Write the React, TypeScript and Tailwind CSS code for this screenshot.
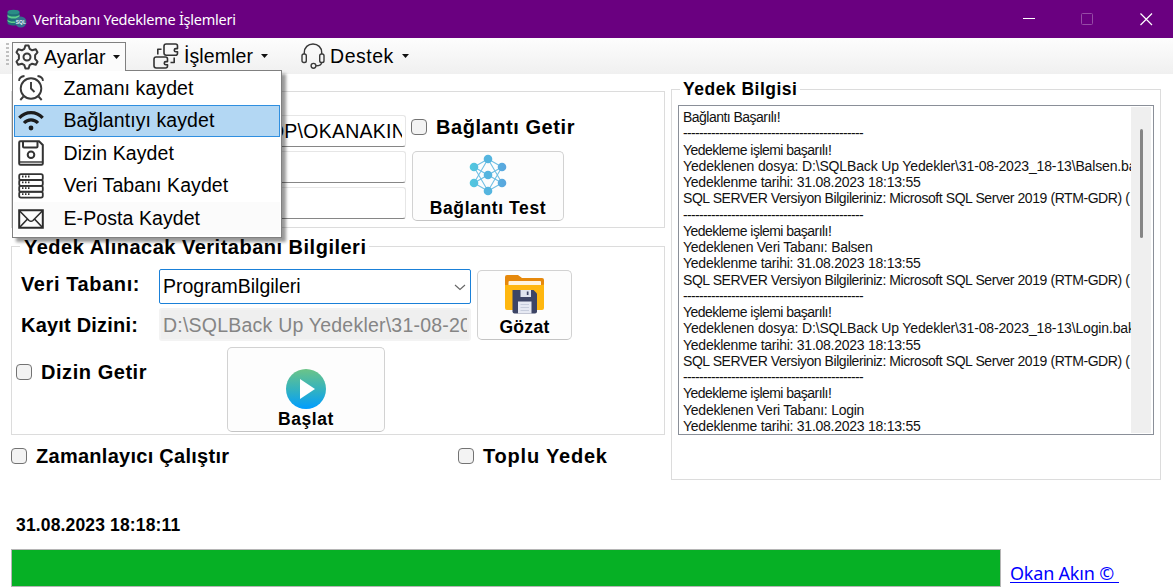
import type { ReactNode } from "react";

const DASHES = "---------------------------------------------";
const SQL_LINE = "SQL SERVER Versiyon Bilgileriniz: Microsoft SQL Server 2019 (RTM-GDR) (";

const LOG: string[] = [
  "Bağlantı Başarılı!",
  DASHES,
  "Yedekleme işlemi başarılı!",
  "Yedeklenen dosya: D:\\SQLBack Up Yedekler\\31-08-2023_18-13\\Balsen.bak",
  "Yedeklenme tarihi: 31.08.2023 18:13:55",
  SQL_LINE,
  DASHES,
  "Yedekleme işlemi başarılı!",
  "Yedeklenen Veri Tabanı: Balsen",
  "Yedeklenme tarihi: 31.08.2023 18:13:55",
  SQL_LINE,
  DASHES,
  "Yedekleme işlemi başarılı!",
  "Yedeklenen dosya: D:\\SQLBack Up Yedekler\\31-08-2023_18-13\\Login.bak",
  "Yedeklenme tarihi: 31.08.2023 18:13:55",
  SQL_LINE,
  DASHES,
  "Yedekleme işlemi başarılı!",
  "Yedeklenen Veri Tabanı: Login",
  "Yedeklenme tarihi: 31.08.2023 18:13:55",
];

function logTracking(line: string) {
  if (line === DASHES) return "tracking-[-0.66px]";
  if (line === SQL_LINE) return "tracking-[-0.43px]";
  if (line.includes("dosya")) return "tracking-[-0.15px]";
  if (line.includes("başarılı") || line.startsWith("Bağlantı")) return "tracking-[-0.53px]";
  return "tracking-[-0.25px]";
}

function AppIcon() {
  return (
    <svg width="20" height="20" viewBox="0 0 20 20" className="shrink-0">
      <path d="M0.5 3v11c0 1.4 2.6 2.5 6 2.5s6-1.100 6-2.500V3z" fill="#1f6f78" />
      <ellipse cx="6.500" cy="3" rx="6" ry="2.300" fill="#2a8c86" />
      <path d="M.5 5.500c1 1.500 3 2 6 2s5-.5 6-2v2c-1 1.500-3 2-6 2s-5-.5-6-2zM.5 10.500c1 1.500 3 2 6 2s5-.5 6-2v1.600c-1 1.500-3 2-6 2s-5-.5-6-2z" fill="#5fd08c" />
      <circle cx="13.800" cy="13" r="5.600" fill="#35728f" />
      <text x="13.800" y="15" fontSize="5" fontWeight="700" fill="#e6f1f5" textAnchor="middle" fontFamily="Liberation Sans, sans-serif">SQL</text>
    </svg>
  );
}

function GearIcon() {
  return (
    <svg width="24" height="26" viewBox="0 0 24 26" fill="none" stroke="#3a3a3a" strokeWidth="2" strokeLinejoin="round">
      <path d="M9.400 4.800 10.400 1.500h3.200l1 3.300 2.600 1.500 3.600-1 1.700 3-2.400 2.800v3.800l2.400 2.800-1.700 3-3.600-1-2.600 1.500-1 3.300h-3.200l-1-3.300-2.600-1.500-3.600 1-1.700-3 2.400-2.800v-3.800L1.500 8.300l1.700-3 3.600 1z" />
      <circle cx="12" cy="13" r="3.500" />
    </svg>
  );
}

function ProcessIcon() {
  return (
    <svg width="26" height="26" viewBox="0 0 26 26" fill="none" stroke="#333" strokeWidth="1.600" strokeLinejoin="round">
      <path d="M11 3.200Q11 1 13.200 1h9.300q2 0 2 2v2.600h-1.600c-2.200 0-2.200 3.200 0 3.200h1.600v1.400q0 2-2 2h-9.300Q11 12.200 11 10z" />
      <path d="M1 16.200Q1 14 3.200 14h9.300q2 0 2 2v2.600h-1.600c-2.200 0-2.200 3.200 0 3.200h1.600V23q0 2-2 2H3.200Q1 25 1 22.800z" />
      <path d="M4.800 11.500V6.200h3.700M21.200 14.500v5h-3.700" />
    </svg>
  );
}

function HeadsetIcon() {
  return (
    <svg width="24" height="26" viewBox="0 0 24 26" fill="none" stroke="#3a3a3a" strokeWidth="1.400">
      <path d="M3.300 11V9.500C3.300 4.500 7 1 12 1s8.700 3.500 8.700 8.500V11" />
      <rect x="1" y="11" width="4.300" height="8.500" rx="1.800" />
      <rect x="18.700" y="11" width="4.300" height="8.500" rx="1.800" />
      <path d="M20.500 19.500c0 2.500-2 3.300-5.400 3.300" />
      <circle cx="12.500" cy="22.800" r="2.400" />
    </svg>
  );
}

function ClockIcon() {
  return (
    <svg width="26" height="26" viewBox="0 0 26 26" fill="none" stroke="#3a3a3a" strokeWidth="1.900">
      <circle cx="13" cy="13.500" r="10.300" />
      <path d="M13 7v6.500l3.500 3.500" />
      <path d="M1 5.800C1.300 3 3 1.300 6.500 1M25 5.800C24.700 3 23 1.300 19.500 1M5.500 21.500l-3.200 3.500M20.500 21.500l3.200 3.500" />
    </svg>
  );
}

function WifiIcon() {
  return (
    <svg width="26" height="22" viewBox="0 0 26 22" fill="none" stroke="#1c1c1c" strokeWidth="3.200">
      <path d="M1.300 7.800c6.500-6.900 16.900-6.900 23.400 0M6 13c4-4.200 10-4.200 14 0" />
      <circle cx="13" cy="18" r="2.400" fill="#1c1c1c" stroke="none" />
    </svg>
  );
}

function DiskIcon() {
  return (
    <svg width="26" height="26" viewBox="0 0 26 26" fill="none" stroke="#333" strokeWidth="2">
      <path d="M2.500 1.200H21l3.800 3.800v18.500q0 1.300-1.300 1.300h-21q-1.300 0-1.300-1.300v-21q0-1.300 1.300-1.300z" />
      <path d="M5 1.200v5.300q0 1 1 1h12.500q1 0 1-1V1.200" />
      <circle cx="13" cy="14.800" r="3.300" />
      <path d="M1 22h24" strokeWidth="1.400" />
    </svg>
  );
}

function ServerIcon() {
  return (
    <svg width="26" height="26" viewBox="0 0 26 26" fill="none" stroke="#333" strokeWidth="1.800">
      <rect x="1.200" y="1.200" width="23.600" height="5.800" rx="1.800" />
      <rect x="1.200" y="7" width="23.600" height="5.800" rx="1.800" />
      <rect x="1.200" y="12.900" width="23.600" height="5.800" rx="1.800" />
      <rect x="1.200" y="18.800" width="23.600" height="5.800" rx="1.800" />
      <path d="M4 3.500h1.500M7 3.500h1.500M10 3.500h1.500M4 9.300h1.500M7 9.300h1.500M10 9.300h1.500M4 15.200h1.500M7 15.200h1.500M10 15.200h1.500M4 21.100h1.500M7 21.100h1.500M10 21.100h1.500" strokeWidth="1.800" />
    </svg>
  );
}

function MailIcon() {
  return (
    <svg width="26" height="20" viewBox="0 0 26 20" fill="none" stroke="#2b2b2b" strokeWidth="2">
      <path d="M1.200 1.200h23.600v17.600H1.200z" />
      <path d="M1.200 1.500 11 11.500q2 1.600 4 0L24.800 1.500M1.500 18.500 9.500 10M24.500 18.500 16.500 10" strokeWidth="1.600" />
    </svg>
  );
}

function NetworkIcon() {
  return (
    <svg width="38" height="42" viewBox="0 0 38 42">
      <defs>
        <linearGradient id="net" x1="0" x2="38" y1="0" y2="0" gradientUnits="userSpaceOnUse">
          <stop offset="0" stopColor="#52c8df" />
          <stop offset="1" stopColor="#5aa5de" />
        </linearGradient>
      </defs>
      <path
        d="M19 5 5 13M19 5 33 13M19 37 5 29M19 37 33 29M19 5 5 29M19 5 33 29M19 37 5 13M19 37 33 13M5 13 19 21 33 13M5 29 19 21 33 29"
        stroke="#72c0e4"
        strokeWidth="1.100"
        fill="none"
      />
      <g fill="url(#net)">
        <circle cx="19" cy="5" r="4.300" fill="#55b5df" />
        <circle cx="5" cy="13" r="4.300" />
        <circle cx="33" cy="13" r="4.300" />
        <circle cx="19" cy="21" r="4.300" fill="#55b5df" />
        <circle cx="5" cy="29" r="4.300" />
        <circle cx="33" cy="29" r="4.300" />
        <circle cx="19" cy="37" r="4.300" fill="#55b5df" />
      </g>
    </svg>
  );
}

function FolderIcon() {
  return (
    <svg width="40" height="40" viewBox="0 0 40 40">
      <path d="M0 2Q0 0 2 0h11l4 3h20q2 0 2 2v12H0z" fill="#e6890c" />
      <rect x="3.500" y="6" width="32.500" height="8" rx="1" fill="#fff4e0" />
      <path d="M0 10h36q0 0 3-.5V33q0 2-2 2H2q-2 0-2-2z" fill="#ffb70f" />
      <path d="M7.500 15h21l3.500 3.500v18q0 2-2 2H9.500q-2 0-2-2z" fill="#3d4566" />
      <path d="M15.500 15h10.500v7H15.500z" fill="#dfe3ee" />
      <path d="M21.800 16.500h1.700v3.500h-1.700z" fill="#3d4566" />
      <path d="M13 26.500h13.500v12H13z" fill="#e6e9f3" />
      <path d="M15.500 29.500h8.500M15.500 32.500h8.500M15.500 35.500h8.500" stroke="#c3c9da" strokeWidth=".9" />
    </svg>
  );
}

function PlayIcon() {
  return (
    <svg width="40" height="40" viewBox="0 0 40 40">
      <defs>
        <linearGradient id="play" x1="0" x2="0" y1="0" y2="1">
          <stop offset="0" stopColor="#6cc487" />
          <stop offset=".5" stopColor="#35b3bd" />
          <stop offset="1" stopColor="#009dff" />
        </linearGradient>
      </defs>
      <circle cx="20" cy="20" r="20" fill="url(#play)" />
      <path d="M14 10v20l15-10z" fill="#fff" />
    </svg>
  );
}

function Caret() {
  return (
    <svg width="7" height="4" viewBox="0 0 7 4" className="shrink-0">
      <path d="M0 0h7L3.500 4z" fill="#111" />
    </svg>
  );
}

function Box() {
  return <span className="block size-4 shrink-0 rounded-[4px] border border-[#737373] bg-[#f3f3f3]" />;
}

function Check({ label, tracking, className }: { label: string; tracking: string; className: string }) {
  return (
    <label className={`flex items-center text-[20px] leading-6 font-bold ${tracking} ${className}`}>
      <Box />
      <span className="ml-[9px]">{label}</span>
    </label>
  );
}

function ActionButton({ className, icon, label }: { className: string; icon: ReactNode; label: string }) {
  return (
    <button
      className={`flex flex-col items-center rounded-[5px] border border-[#d2d2d2] border-b-[#c4c4c4] bg-[#fdfdfd] text-[17.5px] leading-5 font-bold ${className}`}
    >
      {icon}
      <span>{label}</span>
    </button>
  );
}

const MENU: { label: string; icon: ReactNode; active?: boolean; tint?: boolean }[] = [
  { label: "Zamanı kaydet", icon: <ClockIcon /> },
  { label: "Bağlantıyı kaydet", icon: <WifiIcon />, active: true },
  { label: "Dizin Kaydet", icon: <DiskIcon /> },
  { label: "Veri Tabanı Kaydet", icon: <ServerIcon /> },
  { label: "E-Posta Kaydet", icon: <MailIcon />, tint: true },
];

export default function App() {
  return (
    <div className="relative flex h-[588px] w-[1173px] flex-col overflow-hidden bg-white font-['Liberation_Sans',Arial,sans-serif] text-black">
      <header className="flex h-[38px] shrink-0 items-center bg-[#6a0080] pl-[7px] text-white">
        <AppIcon />
        <h1 className="ml-[6px] flex-1 pb-px font-['Noto_Sans','Open_Sans',sans-serif] text-[14.5px] leading-5 font-normal tracking-[-0.25px]">
          Veritabanı Yedekleme İşlemleri
        </h1>
        <svg width="132" height="14" viewBox="0 0 132 14" fill="none" className="mr-[20px]">
          <path d="M2 6.500h12" stroke="#fff" />
          <rect x="60.500" y="1.500" width="11" height="11" rx="1" stroke="#964ba6" />
          <path d="m119.500 1.500 11.500 11.500M131 1.500 119.500 13" stroke="#fff" strokeWidth="1.200" />
        </svg>
      </header>

      <nav className="flex h-9 shrink-0 bg-gradient-to-b from-[#fdfdfd] to-[#f0f0f0] text-[19.5px] leading-6">
        <div className="mt-[5px] ml-[6px] h-[23px] w-[3px] bg-[repeating-linear-gradient(to_bottom,#c0c0c0_0_2px,transparent_2px_4px)]" />
        <div className="mt-1 ml-[3px] flex h-[29px] w-[114px] items-center border border-b-0 border-[#808080] bg-[#fbfbfb] pl-[2px]">
          <GearIcon />
          <span className="ml-[5px]">Ayarlar</span>
          <span className="ml-[8px]"><Caret /></span>
        </div>
        <div className="ml-[27px] flex h-[35px] items-center">
          <ProcessIcon />
          <span className="ml-[5px] tracking-[0.1px]">İşlemler</span>
          <span className="ml-[8px]"><Caret /></span>
        </div>
        <div className="ml-[33px] flex h-[35px] items-center">
          <HeadsetIcon />
          <span className="ml-[5px] tracking-[0.5px]">Destek</span>
          <span className="ml-[8px]"><Caret /></span>
        </div>
      </nav>

      <main className="flex h-[406px] shrink-0 pl-[11px]">
        <div className="flex w-[654px] flex-col">
          <section className="mt-[17px] flex h-[137px] border border-[#dcdcdc]">
            <div className="mt-[23px] ml-[147px] flex w-[247px] flex-col gap-[4px]">
              <div className="h-8 rounded-[3px] border border-[#e6e6e6] border-b-[#868686] px-[3px]">
                <div className="flex justify-end overflow-hidden text-[19.5px] leading-[30px] tracking-[0.25px] whitespace-nowrap">
                  <span className="mr-[-4px]">DESKTOP\OKANAKIN</span>
                </div>
              </div>
              <div className="h-8 rounded-[3px] border border-[#e6e6e6] border-b-[#868686]" />
              <div className="h-8 rounded-[3px] border border-[#e6e6e6] border-b-[#868686]" />
            </div>
            <div className="ml-[5px] flex flex-col">
              <Check label="Bağlantı Getir" tracking="tracking-[0.56px]" className="mt-[23px]" />
              <ActionButton className="mt-[12px] ml-px h-[70px] w-[152px] gap-[2px] pt-[2px] tracking-[0.6px]" icon={<NetworkIcon />} label="Bağlantı Test" />
            </div>
          </section>

          <fieldset className="mt-[8px] h-[199px] min-w-0 border border-[#dcdcdc]">
            <legend className="ml-[8px] h-5 pr-[3px] pl-[4px] text-[20px] leading-[23px] font-bold tracking-[0.5px] whitespace-nowrap">
              Yedek Alınacak Veritabanı Bilgileri
            </legend>
            <div className="flex">
              <div className="w-[147px] pl-[9px] text-[20px] leading-6 font-bold">
                <div className="mt-[16px] tracking-[0.6px]">Veri Tabanı:</div>
                <div className="mt-[17px] tracking-[0.2px]">Kayıt Dizini:</div>
              </div>
              <div className="w-[312px] pt-[13px]">
                <div className="flex h-[35px] items-center justify-between rounded-[2px] border border-[#1a80d8] pr-[4px] pl-[3px] text-[19.5px]">
                  <span>ProgramBilgileri</span>
                  <svg width="12" height="7" viewBox="0 0 12 7" fill="none" className="mt-[2px]">
                    <path d="m1 1 5 4.500L11 1" stroke="#666" strokeWidth="1.100" />
                  </svg>
                </div>
                <div className="mt-[4px] h-[33px] rounded-[3px] border-2 border-[#f3f3f3] bg-[#efefef] px-[2px] text-[19.5px] leading-[31px] tracking-[0.22px] text-[#858585]">
                  <div className="h-[29px] overflow-hidden whitespace-nowrap">D:\SQLBack Up Yedekler\31-08-20</div>
                </div>
              </div>
              <ActionButton className="mt-[14px] ml-[6px] h-[70px] w-[95px] gap-[2px] pt-[4px] tracking-[0.3px]" icon={<FolderIcon />} label="Gözat" />
            </div>
            <div className="flex">
              <Check label="Dizin Getir" tracking="tracking-[0.55px]" className="mt-[19px] ml-[4px] h-6 w-[211px]" />
              <ActionButton className="mt-[6px] h-[85px] w-[158px] pt-[21px] tracking-[0.6px]" icon={<PlayIcon />} label="Başlat" />
            </div>
          </fieldset>

          <div className="mt-[9px] flex">
            <Check label="Zamanlayıcı Çalıştır" tracking="tracking-[0.27px]" className="w-[447px]" />
            <Check label="Toplu Yedek" tracking="tracking-[0.8px]" className="" />
          </div>
        </div>

        <fieldset className="mt-[5px] ml-[6px] h-[401px] w-[490px] min-w-0 border border-[#dcdcdc]">
          <legend className="ml-[8px] h-5 px-[3px] text-[17.5px] leading-[21px] font-bold tracking-[0.5px]">Yedek Bilgisi</legend>
          <div className="mt-[6px] ml-[6px] flex h-[330px] w-[476px] border border-[#8a8f98] py-[1px] pr-[2px] pl-[4px]">
            <ul className="flex-1 overflow-hidden pt-[2px] text-[14px] leading-[16.25px] whitespace-nowrap text-[#111]">
              {LOG.map((line, i) => (
                <li key={i} className={logTracking(line)}>{line}</li>
              ))}
            </ul>
            <div className="flex w-5 shrink-0 justify-center bg-[#efefef] pt-[22px]">
              <div className="h-[109px] w-[3px] rounded-full bg-[#858585]" />
            </div>
          </div>
        </fieldset>
      </main>

      <footer>
        <time className="mt-[35px] ml-[16px] block text-[17.500px] leading-5 font-bold tracking-[0.15px]">31.08.2023 18:18:11</time>
        <div className="mt-[14px] ml-[11px] flex">
          <div className="h-[38px] w-[990px] border border-[#b5b5b5] bg-[#06b025]" />
          <a className="mt-[12px] ml-[9px] h-[22px] w-[109px] border-b border-[#0000ff] font-['Noto_Sans','Open_Sans',sans-serif] text-[18px] leading-6 tracking-[-0.2px] text-[#0000ff]">
            Okan Akın ©
          </a>
        </div>
      </footer>

      <div className="absolute top-[70px] left-[12px] flex h-[168px] w-[270px] flex-col border border-[#808080] bg-white px-[1px] pt-[1px] pb-[2px] shadow-[4px_4px_3px_rgba(0,0,0,0.4)]">
        {MENU.map((item) => (
          <div
            key={item.label}
            className={`flex flex-1 items-center border text-[19.5px] tracking-[0.08px] ${item.active ? "border-[#2f8fe0] bg-[#b3d7f3]" : item.tint ? "border-[#fbfbfb] bg-[#fbfbfb]" : "border-transparent"}`}
          >
            <span className="flex w-[32px] justify-center">{item.icon}</span>
            <span className="ml-[16.500px]">{item.label}</span>
          </div>
        ))}
        <div className="absolute -top-px left-0 h-px w-[112px] bg-[#fbfbfb]" />
      </div>
    </div>
  );
}
